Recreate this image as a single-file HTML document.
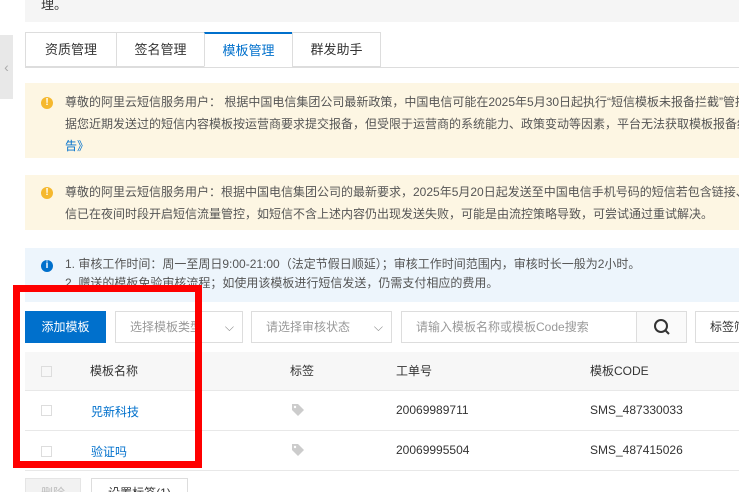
<!DOCTYPE html><html><head><meta charset="utf-8"><style>
*{box-sizing:border-box;margin:0;padding:0}
html,body{width:739px;height:492px;overflow:hidden}
body{background:#fff;font-family:"Liberation Sans","Noto Sans CJK SC",sans-serif;font-size:12px;color:#333;position:relative}
.a{position:absolute}
.banner{position:absolute;left:25px;right:0;font-size:12px;line-height:22px;padding-left:40px;color:#555;white-space:nowrap;overflow:hidden}
.y{background:#fdf6e3}
.ic{position:absolute;left:16px;width:12px;height:12px;border-radius:50%;color:#fff;font-size:10px;line-height:12px;text-align:center;font-weight:bold}
.tab{position:absolute;top:32px;height:35px;line-height:34px;text-align:center;font-size:13px;border:1px solid #ddd;background:#fff;color:#333}
.box{position:absolute;top:311px;height:32px;border:1px solid #ddd;line-height:30px;color:#999;padding-left:14px;font-size:12px;background:#fff}
.cb{position:absolute;left:41px;width:11px;height:11px;border:1px solid #ddd}
.row{position:absolute;left:25px;right:0;border-bottom:1px solid #e8e8e8}
.t{position:absolute;font-size:12px}
</style></head><body>
<div class="a" style="left:25px;top:0;right:0;height:22px;background:#f5f5f5"></div>
<div class="a" style="left:41px;top:-6px;font-size:13px">理。</div>
<div class="a" style="left:0;top:35px;width:13px;height:64px;background:#e8e8e8;color:#aaa;font-size:14px;line-height:64px;text-align:center">‹</div>
<div class="a" style="left:25px;top:67px;right:0;border-top:1px solid #ddd"></div>
<div class="tab" style="left:25px;width:92px">资质管理</div>
<div class="tab" style="left:116px;width:89px">签名管理</div>
<div class="tab" style="left:204px;width:89px;border-top:2px solid #0070cc;color:#0070cc;border-bottom-color:#fff">模板管理</div>
<div class="tab" style="left:292px;width:89px">群发助手</div>
<div class="banner y" style="top:83px;height:75px;padding-top:8px">尊敬的阿里云短信服务用户： 根据中国电信集团公司最新政策，中国电信可能在2025年5月30日起执行“短信模板未报备拦截”管控<br>据您近期发送过的短信内容模板按运营商要求提交报备，但受限于运营商的系统能力、政策变动等因素，平台无法获取模板报备结果<br><span style="color:#0070cc">告》</span><div class="ic" style="top:14px;background:#f5b82e">!</div></div>
<div class="banner y" style="top:175px;height:55px;padding-top:6px">尊敬的阿里云短信服务用户：根据中国电信集团公司的最新要求，2025年5月20日起发送至中国电信手机号码的短信若包含链接、<br>信已在夜间时段开启短信流量管控，如短信不含上述内容仍出现发送失败，可能是由流控策略导致，可尝试通过重试解决。<div class="ic" style="top:12px;background:#f5b82e">!</div></div>
<div class="banner" style="top:248px;height:54px;background:#edf5fc;padding-top:7px;line-height:19px">1. 审核工作时间：周一至周日9:00-21:00（法定节假日顺延）；审核工作时间范围内，审核时长一般为2小时。<br>2. 赠送的模板免验审核流程；如使用该模板进行短信发送，仍需支付相应的费用。<div class="ic" style="top:12px;background:#0070cc">i</div></div>
<div class="a" style="left:25px;top:311px;width:81px;height:32px;background:#0070cc;color:#fff;line-height:32px;text-align:center;font-size:12px">添加模板</div>
<div class="box" style="left:115px;width:128px">选择模板类型<span style="position:absolute;right:8px;color:#888">⌵</span></div>
<div class="box" style="left:251px;width:141px">请选择审核状态<span style="position:absolute;right:8px;color:#888">⌵</span></div>
<div class="box" style="left:401px;width:236px">请输入模板名称或模板Code搜索</div>
<div class="box" style="left:636px;width:51px;padding:0;text-align:center;background:#fafafa"><svg width="20" height="20" viewBox="0 0 20 20" style="margin-top:5px"><circle cx="9" cy="9" r="6" fill="none" stroke="#333" stroke-width="2"/><path d="M13 13l4 4" stroke="#333" stroke-width="2"/></svg></div>
<div class="box" style="left:695px;width:60px;color:#333;white-space:nowrap;overflow:hidden">标签筛选</div>
<div class="row" style="top:352px;height:39px;background:#f7f7f7"></div>
<div class="cb" style="top:366px"></div>
<div class="t" style="left:90px;top:362px">模板名称</div>
<div class="t" style="left:290px;top:362px">标签</div>
<div class="t" style="left:396px;top:362px">工单号</div>
<div class="t" style="left:590px;top:362px">模板CODE</div>
<div class="row" style="top:391px;height:40px"></div>
<div class="cb" style="top:405px"></div>
<div class="t" style="left:91px;top:403px;color:#0070cc">兕新科技</div>
<svg class="a" style="left:291px;top:403px" width="14" height="14" viewBox="0 0 14 14"><path d="M1 1h6l6 6-6 6-6-6z" fill="#ccc"/><circle cx="4" cy="4" r="1.2" fill="#fff"/></svg>
<div class="t" style="left:396px;top:403px">20069989711</div>
<div class="t" style="left:590px;top:403px">SMS_487330033</div>
<div class="row" style="top:431px;height:40px"></div>
<div class="cb" style="top:446px"></div>
<div class="t" style="left:91px;top:443px;color:#0070cc">验证吗</div>
<svg class="a" style="left:291px;top:443px" width="14" height="14" viewBox="0 0 14 14"><path d="M1 1h6l6 6-6 6-6-6z" fill="#ccc"/><circle cx="4" cy="4" r="1.2" fill="#fff"/></svg>
<div class="t" style="left:396px;top:443px">20069995504</div>
<div class="t" style="left:590px;top:443px">SMS_487415026</div>
<div class="a" style="left:25px;top:478px;width:56px;height:30px;background:#f2f2f2;border:1px solid #e5e5e5;color:#bbb;text-align:center;line-height:28px">删除</div>
<div class="a" style="left:91px;top:478px;width:97px;height:30px;border:1px solid #ddd;text-align:center;line-height:28px;color:#333">设置标签(1)</div>
<div class="a" style="left:13px;top:285px;width:189px;height:183px;border:7px solid #f00"></div>
</body></html>
